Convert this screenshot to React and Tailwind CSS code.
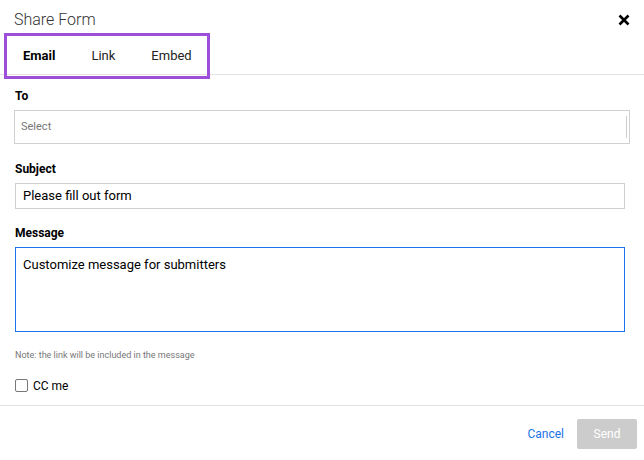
import React from "react";

const App = () => {
  return (
    <div className="w-[644px] h-[460px] bg-white text-[#222] overflow-hidden" style={{ fontFamily: "Roboto, 'Liberation Sans', sans-serif" }}>
      {/* Header */}
      <div className="flex items-center justify-between pl-[14px] pr-[14px] h-[38px] pt-[1px]">
        <h2 className="text-[16px] font-light text-[#333]">Share Form</h2>
        <svg width="12" height="12" viewBox="0 0 12 12">
          <path d="M1.5 1.5 L10.5 10.5 M10.5 1.5 L1.5 10.5" stroke="#000" strokeWidth="2.6" strokeLinecap="butt" />
        </svg>
      </div>

      {/* Tabs */}
      <div className="border-b border-[#e2e2e2] h-[42px] pl-[4px]">
        <div className="w-[206px] h-[46px] -mt-[5px] border-[3px] border-[#9b4fdb] flex items-center gap-[36px] pl-[16px] text-[13px]">
          <span className="font-bold text-black">Email</span>
          <span className="text-[#222]">Link</span>
          <span className="text-[#222]">Embed</span>
        </div>
      </div>

      {/* Form */}
      <div className="px-[15px] pt-[14px]">
        <label className="block text-[12px] font-bold text-black leading-[14px]">To</label>
        <div className="mt-[7px] h-[34px] w-[616px] -ml-[1px] border border-[#d0d0d0] flex items-center pl-[6px] pr-[2px] justify-between">
          <span className="text-[11px] text-[#777]">Select</span>
          <span className="w-[1px] h-[22px] bg-[#ccc]" />
        </div>

        <label className="block text-[12px] font-bold text-black leading-[14px] mt-[18px]">Subject</label>
        <div className="mt-[7px] h-[26px] w-[610px] border border-[#cfcfcf] flex items-center pl-[7px] text-[13px] text-black">
          Please fill out form
        </div>

        <label className="block text-[12px] font-bold text-black leading-[14px] mt-[17px]">Message</label>
        <div className="mt-[7px] h-[85px] w-[610px] border border-[#1a73e8] pl-[7px] pt-[7px] text-[13px] text-black">
          Customize message for submitters
        </div>

        <p className="mt-[17px] text-[9px] text-[#777]">Note: the link will be included in the message</p>

        <label className="mt-[14px] flex items-center gap-[5px] text-[12px] text-black">
          <span className="w-[13px] h-[13px] border border-[#777] rounded-[2px] bg-white" />
          CC me
        </label>
      </div>

      {/* Footer */}
      <div className="mt-[10px] border-t border-[#e2e2e2] flex items-center justify-end gap-[13px] pr-[7px] pt-[13px]">
        <span className="text-[12px] text-[#1a73e8]">Cancel</span>
        <button className="w-[60px] h-[30px] bg-[#cccccc] text-white text-[12px] rounded-[2px]">Send</button>
      </div>
    </div>
  );
};

export default App;
